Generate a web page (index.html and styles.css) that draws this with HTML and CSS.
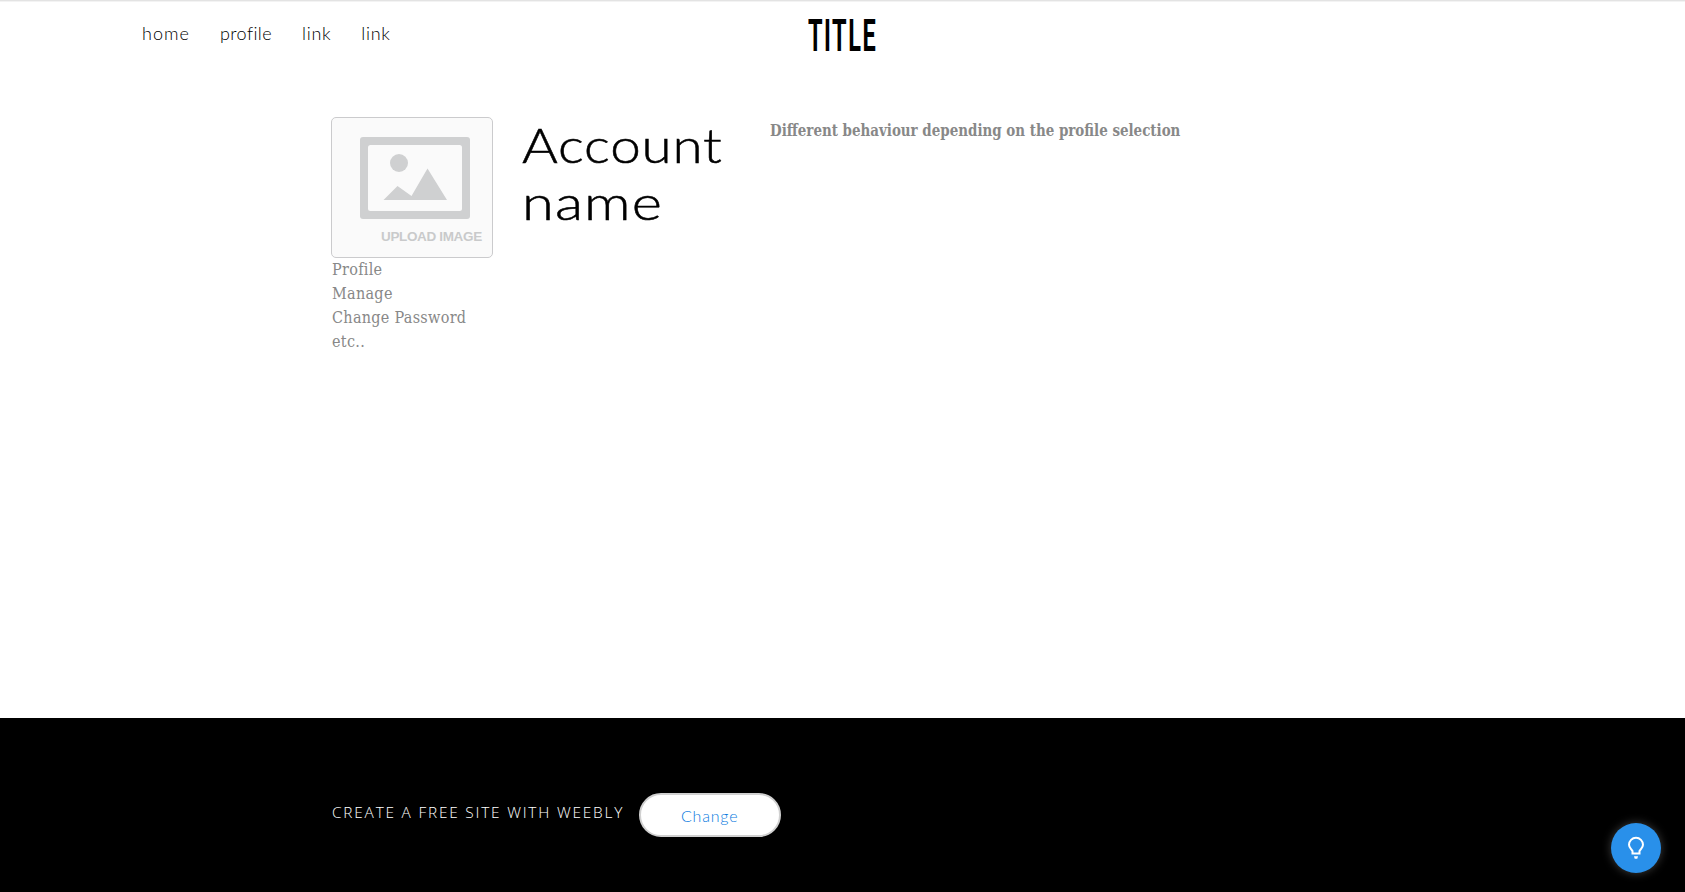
FILE: index.html
```html
<!DOCTYPE html>
<html lang="en">
<head>
<meta charset="utf-8">
<title>Account</title>
<link rel="stylesheet" href="styles.css">
</head>
<body>
<div class="page">
  <header class="header">
    <nav class="nav">
      <a class="nav-home">home</a><a class="nav-profile">profile</a><a>link</a><a>link</a>
    </nav>
    <div class="brand"><span class="brand-text">TITLE</span></div>
  </header>
  <main class="content">
    <aside class="side">
      <div class="upload">
        <svg class="upload-art" width="110" height="82" viewBox="0 0 110 82">
          <rect width="110" height="82" rx="3" fill="#cfd0d1"/>
          <rect x="8" y="8" width="94" height="66" rx="2.5" fill="#fafafa"/>
          <path d="M23.5 63 37.5 49 51.5 59 67.5 31.500 87 63z" fill="#cfd0d1"/>
          <circle cx="39" cy="26" r="9" fill="#cfd0d1"/>
        </svg>
        <span class="upload-label">UPLOAD IMAGE</span>
      </div>
      <ul class="menu">
        <li>Profile</li>
        <li>Manage</li>
        <li>Change Password</li>
        <li>etc..</li>
      </ul>
    </aside>
    <h1 class="account"><span class="account-first">Account</span><br><span class="account-last">name</span></h1>
    <p class="message"><span class="message-text">Different behaviour depending on the profile selection</span></p>
  </main>
  <footer class="footer">
    <span class="promo">CREATE A FREE SITE WITH WEEBLY</span>
    <a class="change">Change</a>
  </footer>
</div>
<a class="hint">
  <svg width="50" height="50" viewBox="0 0 50 50" fill="none" stroke="#fff" stroke-width="2">
    <path d="M21.500 30.500v-2.500C20 25.500 18 24.500 18 21.800a7 7 0 0 1 14 0C32 24.500 30 25.500 28.500 28v2.500z"/>
    <path d="M23 33.200h4l-.7 2.500h-2.600z" fill="#fff" stroke="none"/>
  </svg>
</a>
</body>
</html>
```
FILE: styles.css
```css
* { box-sizing: border-box; }
body { margin: 0; background: #fff; overflow: hidden; }
span { display: inline-block; white-space: nowrap; transform-origin: 0 50%; }
.page { height: 892px; display: flex; flex-direction: column; }
.header {
  height: 117px;
  border-top: 1px solid #e3e3e3;
  box-shadow: inset 0 1px 0 #f3f3f3;
  display: grid;
  grid-template-columns: 808px auto;
}
.nav {
  display: flex;
  gap: 30px;
  padding: 19px 0 0 142px;
  font: 300 18px/26px Lato, sans-serif;
  letter-spacing: 0.7px;
  color: #000;
}
.nav-home { width: 48px; letter-spacing: 1px; }
.nav-profile { width: 52px; letter-spacing: 0.4px; }
.brand { padding-top: 10px; height: 62px; }
.brand-text {
  font: 700 43.5px/51px Roboto, sans-serif;
  letter-spacing: 2.8px;
  color: #000;
  transform: scaleX(0.54);
}
.content {
  flex: 1;
  display: grid;
  grid-template-columns: 191px 248px auto;
  padding-left: 331px;
  align-items: start;
}
.upload {
  width: 162px;
  height: 141px;
  border: 1px solid #cbcbcd;
  border-radius: 5px;
  background: #fafafa;
  padding: 19px 0 0 28px;
}
.upload-art { display: block; }
.upload-label {
  margin: 9px 0 0 21px;
  font: 700 13.5px/18px "Liberation Sans", Arial, sans-serif;
  color: #c9cacb;
  letter-spacing: -0.35px;
}
.menu {
  list-style: none;
  margin: 0;
  padding: 0 0 0 1px;
  font: 16px/24px "Roboto Slab", "DejaVu Serif Condensed", "DejaVu Serif", serif;
  letter-spacing: 0.3px;
  color: #888;
}
.account {
  font: 300 47px/57px Lato, sans-serif;
  margin: 0;
  color: #000;
  -webkit-text-stroke: 0.5px #000;
}
.account-first { transform: scaleX(1.165); letter-spacing: 0.7px; }
.account-last { transform: scaleX(1.23); letter-spacing: 0.9px; }
.message {
  margin: 2px 0 0;
  font: 700 16px/24px "Roboto Slab", "DejaVu Serif Condensed", "DejaVu Serif", serif;
  color: #888;
}
.message-text { transform: scaleX(0.933); }
.footer {
  height: 174px;
  background: #000;
  display: flex;
  align-items: flex-start;
  padding: 75px 0 0 332px;
}
.promo {
  width: 307px;
  font: 300 15.4px/40px "Open Sans", sans-serif;
  letter-spacing: 1.8px;
  color: #fff;
}
.change {
  width: 142px;
  height: 44px;
  border: 2px solid #d0d0d0;
  border-radius: 22px;
  background: #fff;
  padding-left: 40px;
  font: 300 16px/42px Lato, sans-serif;
  letter-spacing: 0.8px;
  color: #0a7be0;
}
.hint {
  position: fixed;
  left: 1611px;
  top: 823px;
  width: 50px;
  height: 50px;
  border-radius: 50%;
  background: #2990ea;
  box-shadow: 0 0 10px rgba(255, 255, 255, 0.25);
}
```
